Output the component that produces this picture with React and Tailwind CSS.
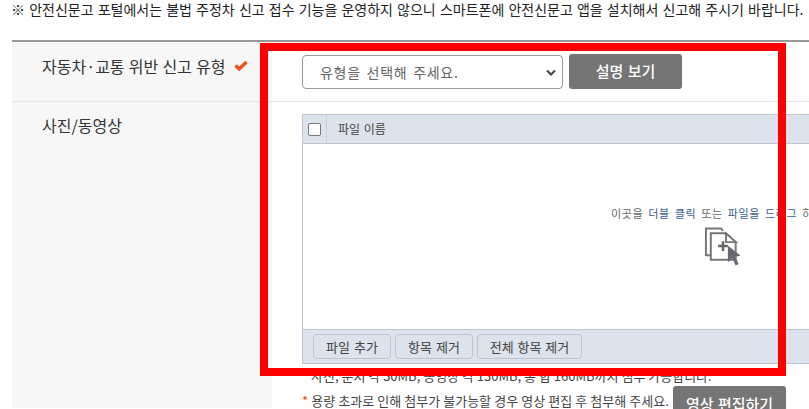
import React from "react";

const font = { fontFamily: '"Noto Sans CJK KR", "Noto Sans", sans-serif' };

const FileIcon = () => (
  <svg width="38" height="41" viewBox="0 0 38 42" className="block" fill="none">
    <path d="M12 29H1.5V1.5H17L19 4" stroke="#777" strokeWidth="2" />
    <path d="M6.5 6.5H22L32 15.5V33.5H6.5Z" fill="#fff" stroke="#777" strokeWidth="2" />
    <path d="M22 6.5V15.5H32Z" fill="#fff" stroke="#777" strokeWidth="2" />
    <path d="M14 19.5H24M19 14.5V24.5" stroke="#666" strokeWidth="2.6" />
    <path d="M24 19L37 29.5L31.5 30.5L35 38L32 39.5L28.5 32L24 36Z" fill="#66696f" />
  </svg>
);

const FootBtn = ({ children, w }) => (
  <button className={`h-[25px] rounded-[4px] border border-[#bcc5d0] bg-[#dce3ec] text-[13px] leading-none text-[#444] [word-spacing:1px] ${w}`}>
    {children}
  </button>
);

export default function App() {
  return (
    <div className="relative h-[409px] w-[809px] overflow-hidden bg-white" style={font}>
      <p className="h-[40px] whitespace-nowrap pl-[11px] text-[14px] leading-[18px] text-[#222] [word-spacing:1px]">
        ※ 안전신문고 포털에서는 불법 주정차 신고 접수 기능을 운영하지 않으니 스마트폰에 안전신문고 앱을 설치해서 신고해 주시기 바랍니다.
      </p>
      <div className="ml-[12px] border-t-2 border-[#999]">
        <div className="flex h-[60px] border-b border-[#e6e6e6]">
          <div className="flex w-[260px] shrink-0 items-start bg-[#f7f7f7] pl-[30px] pt-[12px] text-[16px] leading-[24px] text-[#333] [word-spacing:0.6px]">
            자동차·교통 위반 신고 유형
            <svg width="14" height="12" viewBox="0 0 14 12" className="ml-[9px] mt-[6px]">
              <path d="M1.5 5.5L5.2 9L12.5 2" stroke="#f04e14" strokeWidth="3.4" fill="none" />
            </svg>
          </div>
          <div className="flex items-start gap-[6px] pl-[30px] pt-[13px]">
            <div className="flex h-[34px] w-[261px] items-center justify-between rounded-[4px] border border-[#999] bg-white pl-[17px] pr-[6px] text-[14px] tracking-[0.7px] text-[#666] [word-spacing:2px]">
              유형을 선택해 주세요.
              <svg width="10" height="7" viewBox="0 0 10 7">
                <path d="M1 1.5L5 5.5L9 1.5" stroke="#444" strokeWidth="2" fill="none" />
              </svg>
            </div>
            <button className="-mt-px h-[35px] w-[113px] rounded-[3px] bg-[#757575] text-[15px] font-medium text-white [word-spacing:1px]">
              설명 보기
            </button>
          </div>
        </div>
        <div className="flex h-[306px]">
          <div className="w-[260px] shrink-0 bg-[#f7f7f7] pl-[30px] pt-[11px] text-[16px] leading-[24px] text-[#333]">
            사진/동영상
          </div>
          <div className="w-[537px] shrink-0 pl-[30px] pt-[12px]">
            <div className="flex h-[250px] w-[507px] flex-col border-l border-[#bcc5d0]">
              <div className="flex h-[30px] shrink-0 items-center border-y border-[#bcc5d0] bg-[#dce3ec]">
                <div className="flex h-full w-[24px] items-center justify-center border-r border-[#c6cfda]">
                  <span className="h-[13px] w-[13px] rounded-[2px] border border-[#777] bg-white" />
                </div>
                <span className="pl-[11px] text-[12px] text-[#444] [word-spacing:1px]">파일 이름</span>
              </div>
              <div className="relative flex-1">
                <div className="absolute left-[308px] top-[60px] flex w-[300px] flex-col">
                  <span className="whitespace-nowrap text-[11px] leading-[18px] tracking-[0.6px] text-[#666] [word-spacing:2px]">
                    이곳을 <span className="text-[#3b5e94]">더블 클릭</span> 또는 <span className="text-[#3b5e94]">파일을 드래그</span> 하세요.
                  </span>
                  <div className="ml-[93px] mt-[5px]">
                    <FileIcon />
                  </div>
                </div>
              </div>
              <div className="flex h-[35px] shrink-0 items-center gap-[4px] border-y border-[#bcc5d0] bg-[#dce3ec] pl-[10px]">
                <FootBtn w="w-[78px]">파일 추가</FootBtn>
                <FootBtn w="w-[78px]">항목 제거</FootBtn>
                <FootBtn w="w-[105px]">전체 항목 제거</FootBtn>
              </div>
            </div>
            <p className="mt-[2px] whitespace-nowrap text-[13px] leading-[20px] text-[#444]">
              <span className="text-[#f04e14]">* </span>사진, 문서 각 30MB, 동영상 각 130MB, 총 합 160MB까지 첨부 가능합니다.
            </p>
            <div className="flex items-start whitespace-nowrap text-[13px] leading-[20px] text-[#444] [word-spacing:0.2px]">
              <span className="w-[371px] shrink-0 pt-[5px]">
                <span className="text-[#f04e14]">* </span>용량 초과로 인해 첨부가 불가능할 경우 영상 편집 후 첨부해 주세요.
              </span>
              <button className="h-[35px] w-[113px] shrink-0 rounded-[3px] bg-[#757575] text-[15px] font-medium text-white [word-spacing:1px]">
                영상 편집하기
              </button>
            </div>
          </div>
          <div className="flex-1" />
        </div>
      </div>
      <div className="pointer-events-none absolute left-[260px] top-[43px] h-[333px] w-[526px] border-[8px] border-[#ff0000]" />
    </div>
  );
}
